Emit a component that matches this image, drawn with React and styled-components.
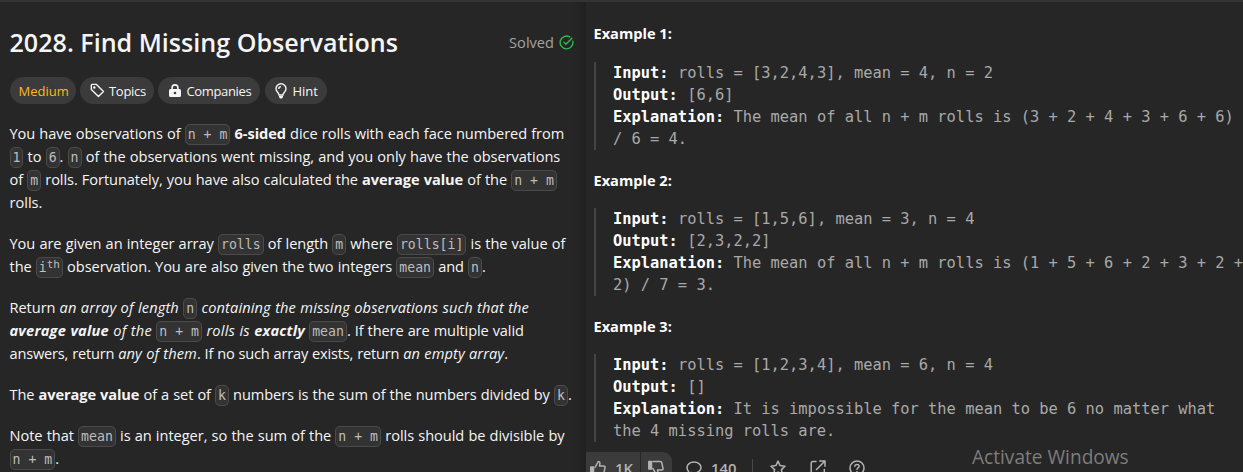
import React from "react";
import styled, { createGlobalStyle } from "styled-components";

const Global = createGlobalStyle`
  *{box-sizing:border-box}
  body{margin:0;background:#262626;overflow:hidden;font-family:"Open Sans","Noto Sans",sans-serif;color:#f5f5f5}
  p{margin:0}
`;
const Page = styled.div`display:flex;width:1243px;height:472px;overflow:hidden;border-top:2px solid #333;background:#262626;position:relative;`;
const Left = styled.main`width:586px;flex:none;padding:25px 0 0 9.5px;background:linear-gradient(90deg,#262626 572px,#212121 584px,#1e1e1e 585px,#262626 586px);`;
const Right = styled.section`flex:1;display:flex;flex-direction:column;overflow:hidden;`;
const Head = styled.header`display:flex;justify-content:space-between;align-items:center;width:564.5px;height:32px;`;
const Title = styled.h1`margin:0;padding-bottom:2px;font-size:25.1px;font-weight:600;line-height:30px;white-space:nowrap;`;
const Solved = styled.div`display:flex;align-items:center;gap:5px;font-size:14.6px;line-height:20px;padding-bottom:2px;color:#a3a3a3;`;
const Tags = styled.div`display:flex;margin-top:18px;height:27px;margin-left:.5px;`;
const Tag = styled.div`display:flex;align-items:center;height:27px;width:${p => p.$w}px;margin-right:${p => p.$gap || 4}px;padding-left:${p => p.$pl || 9.5}px;gap:${p => p.$g || 4.5}px;border-radius:14px;background:#3b3b3b;font-size:13px;letter-spacing:${p => p.$ls || 0}px;white-space:nowrap;color:${p => p.$c || "#f5f5f5"};`;
const Para = styled.div`margin-top:17.9px;font-size:14.6px;line-height:23.1px;`;
const Line = styled.p`height:23.1px;white-space:nowrap;word-spacing:.4px;letter-spacing:${p => p.$ls || 0}px;em{letter-spacing:${p => p.$em || 0}px}`;
const Code = styled.code`font:normal 13.2px/15px "DejaVu Sans Mono",monospace;letter-spacing:0;word-spacing:0;color:#bdbdbd;background:#333;border:1px solid #4b4b4b;border-radius:5px;padding:2px;white-space:pre;sup{font-size:11px;line-height:0;vertical-align:baseline;position:relative;top:-4px}`;
const Example = styled.section`height:146.2px;padding:0 0 0 8px;`;
const Name = styled.h2`margin:0 0 0 -.5px;font-size:14.6px;line-height:23.1px;font-weight:700;color:#fff;`;
const Block = styled.pre`margin:16.4px 0 0;height:88px;padding-left:17px;border-left:2px solid #444;font:15.4px/22px "DejaVu Sans Mono",monospace;color:#a9a9a9;b{color:#fff}`;
const Examples = styled.div`padding-top:20.4px;height:450px;flex:none;overflow:hidden;`;
const Bar = styled.footer`display:flex;align-items:center;height:31px;flex:none;color:#b3b3b3;font-size:14.8px;font-weight:600;`;
const Vote = styled.div`display:flex;align-items:center;height:31px;width:${p => p.$w}px;padding-left:${p => p.$pl}px;gap:9px;background:#3b3b3b;border-radius:${p => p.$r || 0};margin-right:1px;`;
const Count = styled.div`display:flex;align-items:center;gap:9px;margin-left:13px;width:66px;`;
const Rule = styled.i`width:1px;height:18px;background:#484848;margin-right:17px;`;
const Actions = styled.div`display:flex;align-items:center;gap:23.5px;`;
const Watermark = styled.div`position:absolute;left:972px;top:442px;font-size:19.1px;line-height:26px;color:#7d7d7d;white-space:nowrap;`;

const Svg = ({ s = 16, w = 1.5, children }) => <svg width={s} height={s} viewBox="0 0 16 16" fill="none" stroke="currentColor" strokeWidth={w} strokeLinejoin="round" strokeLinecap="round">{children}</svg>;

const examples = [
  ["rolls = [3,2,4,3], mean = 4, n = 2", "[6,6]", "The mean of all n + m rolls is (3 + 2 + 4 + 3 + 6 + 6)\n/ 6 = 4."],
  ["rolls = [1,5,6], mean = 3, n = 4", "[2,3,2,2]", "The mean of all n + m rolls is (1 + 5 + 6 + 2 + 3 + 2 +\n2) / 7 = 3."],
  ["rolls = [1,2,3,4], mean = 6, n = 4", "[]", "It is impossible for the mean to be 6 no matter what\nthe 4 missing rolls are."],
];

export default function App() {
  return (
    <>
      <Global />
      <Page>
        <Left>
          <Head>
            <Title>2028. Find Missing Observations</Title>
            <Solved>Solved
              <svg width="15" height="15" viewBox="0 0 15 15" fill="none" stroke="#2cbb4f" strokeWidth="1.4" strokeLinecap="round"><path d="M13.8 6.2A6.4 6.4 0 1 1 10.7 1.9M4.9 7.3l2 2 6-6" /></svg>
            </Solved>
          </Head>
          <Tags>
            <Tag $w={66} $pl={8.5} $c="#ffb81c">Medium</Tag>
            <Tag $w={74} $ls={-0.3}><Svg s={15}><path d="M1.4 2.5v4.4l7.6 7.5 5.4-5.3-7.5-7.6H2.4a1 1 0 0 0-1 1z" /><circle cx="4.6" cy="4.7" r=".6" fill="currentColor" /></Svg>Topics</Tag>
            <Tag $w={102} $gap={5} $pl={11} $g={5.5} $ls={-0.35}><svg width="12" height="13" viewBox="0 0 12 13" fill="currentColor"><path fillRule="evenodd" d="M2.3 5V3.8a3.7 3.7 0 0 1 7.4 0V5h.8q1.5 0 1.5 1.5v5q0 1.5-1.5 1.5h-9Q0 13 0 11.5v-5Q0 5 1.5 5zm1.6 0h4.2V3.8a2.1 2.1 0 0 0-4.2 0zM6 7.7a1.3 1.3 0 1 0 0 2.6 1.3 1.3 0 0 0 0-2.6z" /></svg>Companies</Tag>
            <Tag $w={62} $g={6}><svg width="12" height="16" viewBox="0 0 12 16" fill="none" stroke="currentColor" strokeWidth="1.4"><path d="M4 12c0-2.400-3-3.300-3-6.300a5 5 0 0 1 10 0c0 3-3 3.900-3 6.300zM3.700 5.900A2.300 2.300 0 0 1 6 3.600" /><path d="M4 13h4v1L7 15.400H5L4 14z" fill="currentColor" stroke="none" /></svg>Hint</Tag>
          </Tags>
          <Para>
            <Line $ls={-0.06}>You have observations of <Code>n + m</Code> <b>6-sided</b> dice rolls with each face numbered from</Line>
            <Line $ls={-0.04}><Code>1</Code> to <Code>6</Code>. <Code>n</Code> of the observations went missing, and you only have the observations</Line>
            <Line $ls={-0.07}>of <Code>m</Code> rolls. Fortunately, you have also calculated the <b>average value</b> of the <Code>n + m</Code></Line>
            <Line>rolls.</Line>
          </Para>
          <Para>
            <Line $ls={-0.05}>You are given an integer array <Code>rolls</Code> of length <Code>m</Code> where <Code>rolls[i]</Code> is the value of</Line>
            <Line $ls={-0.07}>the <Code>i<sup>th</sup></Code> observation. You are also given the two integers <Code>mean</Code> and <Code>n</Code>.</Line>
          </Para>
          <Para>
            <Line $ls={-0.05} $em={0.13}>Return <em>an array of length <Code>n</Code> containing the missing observations such that the</em></Line>
            <Line $ls={-0.11} $em={0.2}><em><b>average value</b> of the <Code>n + m</Code> rolls is <b>exactly</b></em> <Code>mean</Code>. If there are multiple valid</Line>
            <Line $ls={-0.19} $em={0.08}>answers, return <em>any of them</em>. If no such array exists, return <em>an empty array</em>.</Line>
          </Para>
          <Para>
            <Line $ls={-0.09}>The <b>average value</b> of a set of <Code>k</Code> numbers is the sum of the numbers divided by <Code>k</Code>.</Line>
          </Para>
          <Para>
            <Line $ls={-0.04}>Note that <Code>mean</Code> is an integer, so the sum of the <Code>n + m</Code> rolls should be divisible by</Line>
            <Line><Code>n + m</Code>.</Line>
          </Para>
        </Left>
        <Right>
          <Examples>
            {examples.map(([a, b, c], i) => (
              <Example key={i}>
                <Name>Example {i + 1}:</Name>
                <Block><b>Input:</b> {a}{"\n"}<b>Output:</b> {b}{"\n"}<b>Explanation:</b> {c}</Block>
              </Example>
            ))}
          </Examples>
          <Bar>
            <Vote $w={54} $pl={4}><Svg><path d="M5 7.500 8.200 1.500c2 0 2 1.500 1.300 4.500h4.200c1 0 1.500.8 1.300 1.700l-1.200 5.600c-.2.800-.8 1.200-1.500 1.200H5" /><path d="M.8 7h2.700v7.500H.8z" fill="currentColor" /></Svg>1K</Vote>
            <Vote $w={31} $pl={7} $r="0 9px 9px 0"><Svg><path d="M5 8.500l3.200 6c2 0 2-1.500 1.300-4.500h4.200c1 0 1.500-.8 1.300-1.700l-1.200-5.600c-.2-.8-.8-1.200-1.500-1.200H5" /><path d="M.8 1.500h2.700V9H.8z" fill="currentColor" /></Svg></Vote>
            <Count><Svg><path d="M2.600 11.400A5.700 5.700 0 0 1 1 7.500C1 4.300 4.100 2 8 2s7 2.300 7 5.500S11.900 13 8 13a8 8 0 0 1-2.600-.5L1.700 14z" /></Svg>140</Count>
            <Rule />
            <Actions>
              <Svg><path d="M8 1.100l2.100 4.500 4.900.6-3.600 3.400.9 4.900L8 12.100l-4.300 2.400.9-4.900L1 6.200l4.900-.6z" /></Svg>
              <Svg><path d="M6 1.500H3A1.800 1.800 0 0 0 1.200 3.300V13A1.800 1.800 0 0 0 3 14.800h9.500a1.800 1.800 0 0 0 1.800-1.800V9.500M9.800 1h5.200v5.200M15 1 6.500 9.500" /></Svg>
              <Svg><circle cx="8" cy="8" r="7" /><path d="M5.900 6.200C6 3.800 10.200 4 10.100 6.400 10 7.800 8 7.800 8 9.300M8 11.500v.1" /></Svg>
            </Actions>
          </Bar>
        </Right>
        <Watermark>Activate Windows</Watermark>
      </Page>
    </>
  );
}
